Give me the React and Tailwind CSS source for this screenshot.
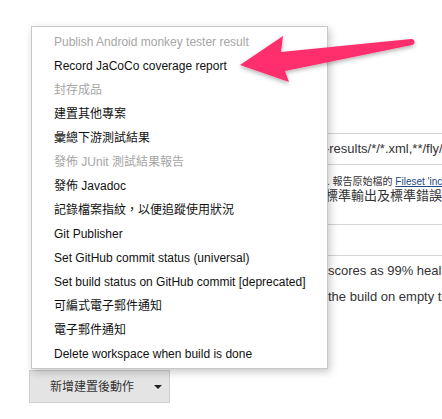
const items = [
  { label: "Publish Android monkey tester result", disabled: true },
  { label: "Record JaCoCo coverage report" },
  { label: "封存成品", disabled: true },
  { label: "建置其他專案" },
  { label: "彙總下游測試結果" },
  { label: "發佈 JUnit 測試結果報告", disabled: true },
  { label: "發佈 Javadoc" },
  { label: "記錄檔案指紋，以便追蹤使用狀況" },
  { label: "Git Publisher" },
  { label: "Set GitHub commit status (universal)" },
  { label: "Set build status on GitHub commit [deprecated]" },
  { label: "可編式電子郵件通知" },
  { label: "電子郵件通知" },
  { label: "Delete workspace when build is done" },
];

function Arrow() {
  return (
    <svg
      className="absolute inset-0 pointer-events-none"
      width="442"
      height="419"
      viewBox="0 0 442 419"
    >
      <defs>
        <filter id="shadow" x="-10%" y="-30%" width="120%" height="160%">
          <feDropShadow dx="0" dy="2" stdDeviation="2" floodColor="#000" floodOpacity="0.3" />
        </filter>
      </defs>
      <path
        d="M240 65 L283 36 L281 52 L411 39 A3 3 0 0 1 412 45 L285 71 L289 82 Z"
        fill="#ff2d6c"
        filter="url(#shadow)"
      />
    </svg>
  );
}

export default function App() {
  return (
    <div className="relative w-[442px] h-[419px] overflow-hidden bg-white font-['Liberation_Sans',Arial,'Noto_Sans_CJK_TC',sans-serif] text-[12px] text-[#333]">
      <div className="grid grid-cols-[327px_1fr] h-full">
        <div className="pt-[370px] pl-[29px]">
          <button className="flex items-center h-[33px] w-[141px] pl-[20px] bg-[#e4e4e4] border border-[#cfcfcf] text-[#333] text-[12px]">
            <span>新增建置後動作</span>
            <span className="ml-[20px] w-0 h-0 border-x-[4px] border-x-transparent border-t-[4px] border-t-[#222]" />
          </button>
        </div>

        {/* page behind the dropdown, only its right edge shows */}
        <div className="overflow-hidden pt-[133px] whitespace-nowrap text-[13px]">
          <div className="h-[32px] border-y border-[#d4d4d4] flex items-center">
            <span className="-ml-[23px]">test-results/*/*.xml,**/fly/*.xml</span>
          </div>
          <div className="mt-[11px] h-[12px] leading-[12px] text-[10px] text-[#333]">
            <span>. 報告原始檔的 </span>
            <span className="text-[#204a87] underline">Fileset 'includes'</span>
          </div>
          <div className="h-[16px] leading-[16px] -ml-[2px]">
            標準輸出及標準錯誤
          </div>
          <div className="mt-[20px] h-[32px] border-y border-[#d4d4d4]" />
          <div className="mt-[7px] h-[16px] leading-[16px] ml-[1px]">
            scores as 99% healthy
          </div>
          <div className="mt-[10px] h-[16px] leading-[16px] ml-[1px]">
            the build on empty test
          </div>
        </div>
      </div>

      <div className="absolute left-[31px] top-[26px] w-[297px] h-[343px] bg-white border border-[#c8c8c8] shadow-[2px_3px_8px_rgba(0,0,0,0.22)] pt-[3px] pb-[2px]">
        {items.map((item) => (
          <div
            key={item.label}
            className={
              "h-[24px] flex items-center pl-[22px] whitespace-nowrap " +
              (item.disabled ? "text-[#a6a6a6]" : "text-[#111]")
            }
          >
            {item.label}
          </div>
        ))}
      </div>

      <Arrow />
    </div>
  );
}
